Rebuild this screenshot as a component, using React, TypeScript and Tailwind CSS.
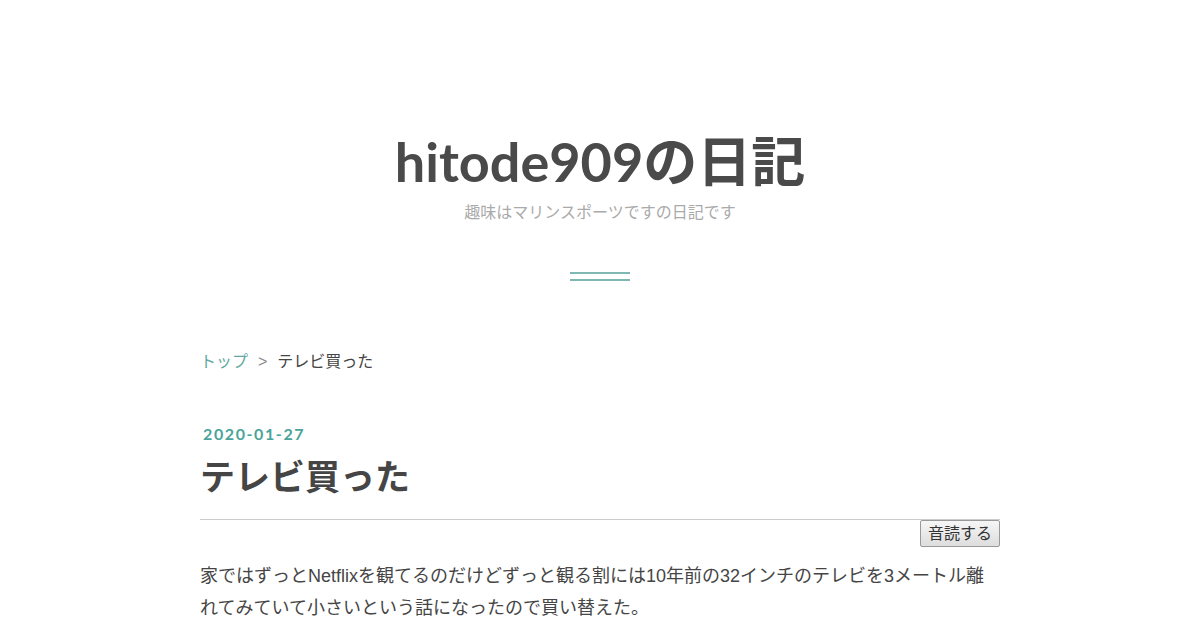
import React from "react";

const sans = "font-['Liberation_Sans','Noto_Sans_CJK_JP',sans-serif]";
const lato = "font-['Lato','Noto_Sans_CJK_JP',sans-serif]";

const App = () => {
  return (
    <div className={`min-h-[630px] bg-white text-[#454545] ${sans}`}>
      {/* Header */}
      <header className="pt-[130px] text-center">
        <h1 className={`text-[54px] leading-[64px] font-bold text-[#4a4a4a] ${lato}`}>
          hitode909の日記
        </h1>
        <p className="mt-[7px] text-[16px] leading-[24px] text-[#aaaaaa]">
          趣味はマリンスポーツですの日記です
        </p>
        <div className="mx-auto mt-[47px] h-[9px] w-[60px] border-y-2 border-[#7fb8b2]" />
      </header>

      <main className="mx-auto w-[800px]">
        {/* Breadcrumb */}
        <div className="mt-[69px] flex items-center text-[16px] leading-[24px]">
          <span className="text-[#5fa8a0]">トップ</span>
          <span className="mx-[10px] text-[#888]">&gt;</span>
          <span className="text-[#454545]">テレビ買った</span>
        </div>

        {/* Entry header */}
        <div className={`mt-[48px] pl-[3px] text-[16px] leading-[24px] font-bold tracking-[1.6px] text-[#4aa39a] ${lato}`}>
          2020-01-27
        </div>
        <h2 className="mt-[7px] text-[35px] leading-[50px] font-bold text-[#454545]">
          テレビ買った
        </h2>
        <div className="mt-[16px] border-t border-[#cccccc]" />
        <div className="flex justify-end">
          <button className="h-[27px] w-[80px] rounded-[2px] border border-[#999] bg-gradient-to-b from-[#f6f6f6] to-[#dddddd] text-[16px] text-[#333]">
            音読する
          </button>
        </div>

        {/* Body */}
        <div className="mt-[13px] text-[18px] leading-[32px]">
          <p>
            家ではずっとNetflixを観てるのだけどずっと観る割には10年前の32インチのテレビを3メートル離れてみていて小さいという話になったので買い替えた。
          </p>
        </div>
      </main>
    </div>
  );
};

export default App;
